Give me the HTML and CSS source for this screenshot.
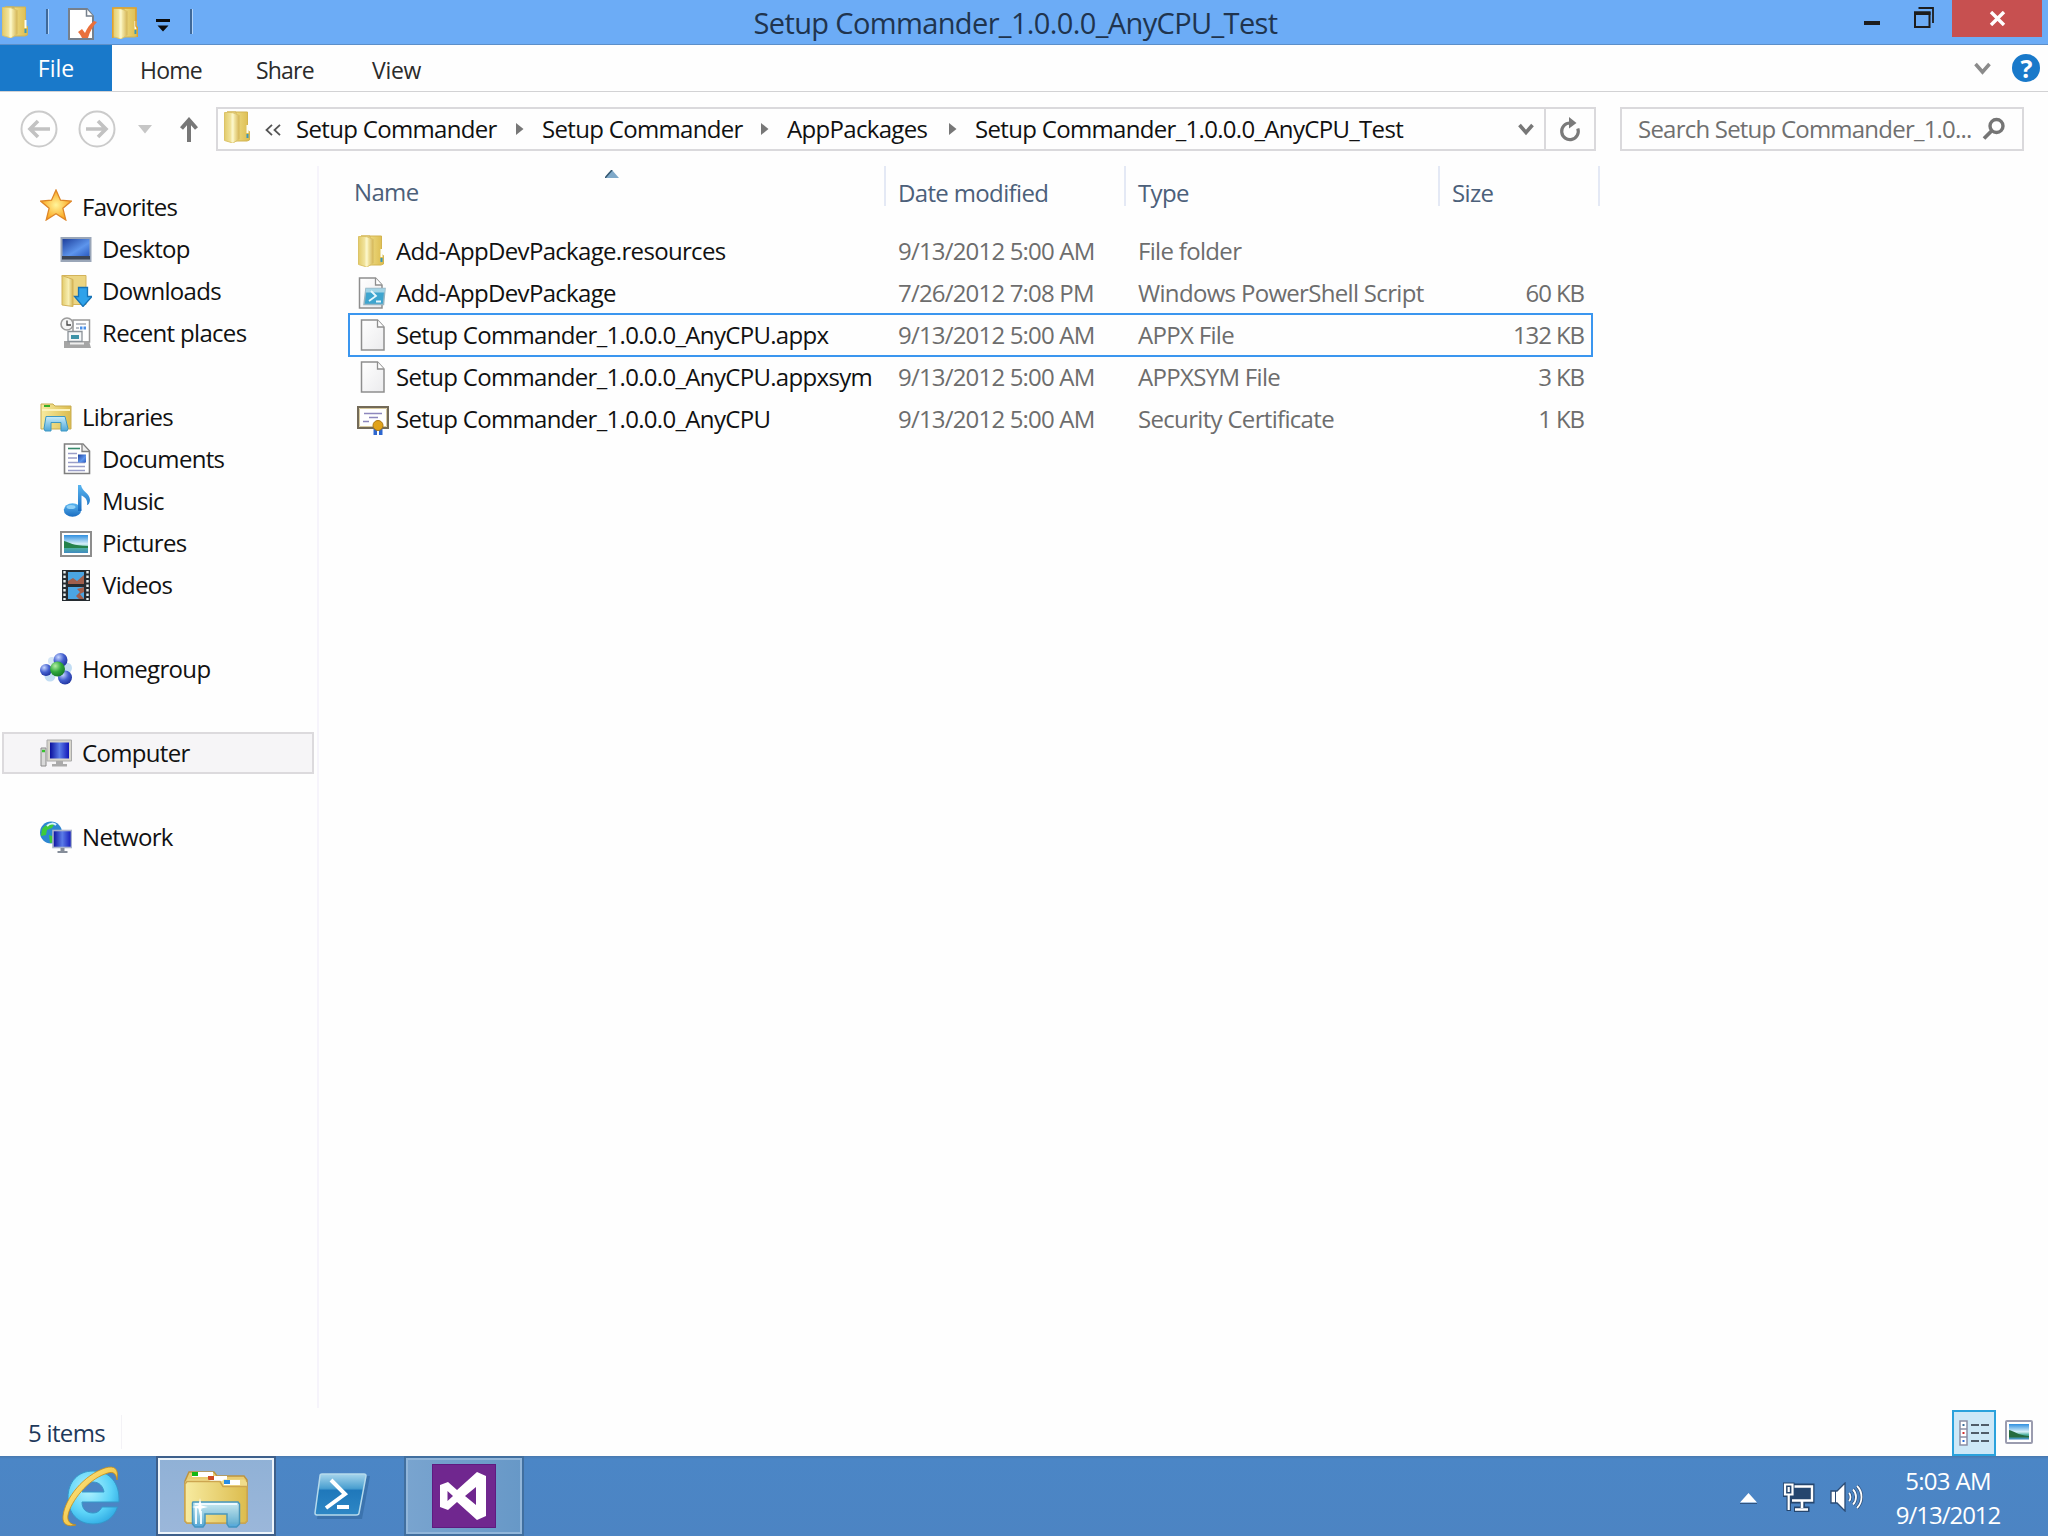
FILE: index.html
```html
<!DOCTYPE html>
<html>
<head>
    <meta charset="utf-8">
    <title>Setup Commander_1.0.0.0_AnyCPU_Test</title>
    <link rel="stylesheet" href="styles.css">
</head>
<body>
    <!-- shared gradients and symbols -->
    <svg class="defs" width="0" height="0">
        <defs>
            <linearGradient id="gFolder" x1="0" x2="1"><stop offset="0" stop-color="#f7eba0"/><stop offset="1" stop-color="#dcbc4e"/></linearGradient>
            <linearGradient id="gFlap" x1="0" x2="1"><stop offset="0" stop-color="#e2cb6a"/><stop offset=".6" stop-color="#f8efb4"/><stop offset="1" stop-color="#d3b352"/></linearGradient>
            <linearGradient id="gBlue" x1="0" y1="0" x2="1" y2="1"><stop offset="0" stop-color="#1d3f9c"/><stop offset=".6" stop-color="#5d95ec"/><stop offset="1" stop-color="#2c5cc0"/></linearGradient>
            <linearGradient id="gScreen" x1="0" x2="1"><stop offset="0" stop-color="#0a0f9c"/><stop offset=".5" stop-color="#5b7ce8"/><stop offset="1" stop-color="#1116b8"/></linearGradient>
            <linearGradient id="gPage" x1="0" y1="0" x2="1" y2="1"><stop offset="0" stop-color="#ffffff"/><stop offset="1" stop-color="#ebebed"/></linearGradient>
            <linearGradient id="gGlass" x1="0" y1="0" x2="0" y2="1"><stop offset="0" stop-color="#c9edfb"/><stop offset="1" stop-color="#4da6d8"/></linearGradient>
            <linearGradient id="gNote" x1="0" y1="0" x2="0" y2="1"><stop offset="0" stop-color="#59b5f0"/><stop offset="1" stop-color="#1a6cc0"/></linearGradient>
            <linearGradient id="gSky" x1="0" y1="0" x2="0" y2="1"><stop offset="0" stop-color="#2f8fe0"/><stop offset=".5" stop-color="#d8f0f8"/><stop offset=".7" stop-color="#4db1a0"/><stop offset="1" stop-color="#3f8ac0"/></linearGradient>
            <linearGradient id="gPs" x1="0" y1="0" x2="0" y2="1"><stop offset="0" stop-color="#a6d5ec"/><stop offset=".35" stop-color="#4a9fd0"/><stop offset=".4" stop-color="#1f78bb"/><stop offset="1" stop-color="#2e87c5"/></linearGradient>
            <linearGradient id="gRing" x1="0" y1="0" x2="1" y2="1"><stop offset="0" stop-color="#fff09a"/><stop offset="1" stop-color="#eba90c"/></linearGradient>
            <radialGradient id="gStar"><stop offset="0" stop-color="#fff59b"/><stop offset="1" stop-color="#fba51c"/></radialGradient>
            <radialGradient id="gIe" cx=".4" cy=".35" r=".75"><stop offset="0" stop-color="#b4f3ff"/><stop offset=".6" stop-color="#5bd3f8"/><stop offset="1" stop-color="#27a2df"/></radialGradient>
            <radialGradient id="gBall" cx=".35" cy=".3" r=".8"><stop offset="0" stop-color="#c6d6ff"/><stop offset=".5" stop-color="#4460cf"/><stop offset="1" stop-color="#1a2c96"/></radialGradient>
            <radialGradient id="gGreen" cx=".35" cy=".3" r=".8"><stop offset="0" stop-color="#b5f0a4"/><stop offset=".5" stop-color="#2fa83c"/><stop offset="1" stop-color="#117026"/></radialGradient>
            <symbol id="folder" viewBox="0 0 26 32">
                <path d="M3 1h20.500v18.500l2 1v8.500l-2.500 1H12V1z" fill="url(#gFolder)" stroke="#d3b450"/>
                <path d="M.5 1.500h8l7 3v23.500l-6.500 4L.5 29.500z" fill="url(#gFlap)" stroke="#dcc368"/>
                <path d="M8.500 3v28.500" stroke="#fbf5c8" stroke-width="2"/>
                <path d="M23.500 14v8" stroke="#fdfdf2" stroke-width="2"/>
                <path d="M23.500 23v4" stroke="#3a97b8" stroke-width="2"/>
            </symbol>
            <symbol id="page" viewBox="0 0 26 32">
                <path d="M1.500 1h16l6.500 7v23H1.500z" fill="url(#gPage)" stroke="#8e8e8e" stroke-width="1.500"/>
                <path d="M17.500 1v7H24" fill="#fff" stroke="#8e8e8e" stroke-width="1.300"/>
            </symbol>
        </defs>
    </svg>

    <div class="title-bar">
        <div class="quick-access">
            <svg class="qa-folder" width="26" height="32"><use href="#folder"/></svg>
            <span class="qa-sep"></span>
            <svg class="qa-props" width="30" height="32" viewBox="0 0 30 32">
                <path d="M1 1h18l6 7v23H1z" fill="#fff" stroke="#76808c" stroke-width="2"/>
                <path d="M18.500 1v7H25" fill="#fff" stroke="#76808c" stroke-width="1.500"/>
                <path d="M10 24l4-3 3 4c2-5 5-9 9-12l3 1c-4 4-7 9-9 16h-6c-1-2-2-4-4-6z" fill="#e9703b"/>
            </svg>
            <svg class="qa-new" width="26" height="32"><use href="#folder"/><path d="M.8 31V1H24v18l1.500 2v9" fill="none" stroke="#e0a22e" stroke-width="1.600"/></svg>
            <svg class="qa-drop" width="14" height="13" viewBox="0 0 14 13"><path d="M0 0h14v3H0zM1.500 6.500h11L7 12.500z" fill="#0c0c0c"/></svg>
            <span class="qa-sep qa-sep-last"></span>
        </div>
        <div class="title"><span>Setup Commander_1.0.0.0_AnyCPU_Test</span></div>
        <div class="window-buttons">
            <svg class="win-min" width="16" height="4"><rect width="16" height="4" fill="#1d1d1d"/></svg>
            <svg class="win-max" width="20" height="21" viewBox="0 0 20 21"><path d="M4.500 1H19v15" fill="none" stroke="#1d1d1d" stroke-width="1.800"/><path d="M1 5.500h14.500V20H1z" fill="none" stroke="#1d1d1d" stroke-width="2"/><path d="M0 4.500h16.500V8H0z" fill="#1d1d1d"/></svg>
            <div class="win-close"><svg width="17" height="15" viewBox="0 0 17 15"><path d="M2 1l13 13M15 1L2 14" stroke="#fff" stroke-width="3.400"/></svg></div>
        </div>
    </div>

    <div class="ribbon">
        <div class="tab-file">File</div>
        <div class="tab tab-home">Home</div>
        <div class="tab tab-share">Share</div>
        <div class="tab tab-view">View</div>
        <svg class="ribbon-toggle" width="17" height="13" viewBox="0 0 17 13"><path d="M1.500 2l7 8 7-8" fill="none" stroke="#8b8b8b" stroke-width="3.500"/></svg>
        <div class="help">?</div>
    </div>

    <div class="nav-bar">
        <svg width="38" height="38" viewBox="0 0 38 38" fill="none"><circle cx="19" cy="19" r="17.500" stroke="#cbcbcb" stroke-width="2"/><path d="M30 19H11M18 11l-8 8 8 8" stroke="#c2c2c2" stroke-width="3.600"/></svg>
        <svg class="nav-forward" width="38" height="38" viewBox="0 0 38 38" fill="none"><circle cx="19" cy="19" r="17.500" stroke="#cbcbcb" stroke-width="2"/><path d="M8 19h19M20 11l8 8-8 8" stroke="#c2c2c2" stroke-width="3.600"/></svg>
        <svg class="nav-recent" width="14" height="9"><path d="M0 0h14L7 8.500z" fill="#c6c6c6"/></svg>
        <svg class="nav-up" width="18" height="25" viewBox="0 0 18 25" fill="none"><path d="M9 25V3M1.500 11.500L9 3l7.500 8.500" stroke="#777" stroke-width="4"/></svg>
        <div class="address">
            <svg class="address-icon" width="26" height="32"><use href="#folder"/></svg>
            <svg class="crumb-more" width="16" height="12" viewBox="0 0 16 12" fill="none"><path d="M7 .8L1.500 6 7 11.200M15 .8L9.500 6l5.500 5.200" stroke="#555" stroke-width="1.800"/></svg>
            <span class="crumb crumb-1">Setup Commander</span>
            <svg class="crumb-arrow" width="8" height="12"><path d="M0 0l7.500 6L0 12z" fill="#777"/></svg>
            <span class="crumb crumb-2">Setup Commander</span>
            <svg class="crumb-arrow" width="8" height="12"><path d="M0 0l7.500 6L0 12z" fill="#777"/></svg>
            <span class="crumb crumb-3">AppPackages</span>
            <svg class="crumb-arrow" width="8" height="12"><path d="M0 0l7.500 6L0 12z" fill="#777"/></svg>
            <span class="crumb crumb-4">Setup Commander_1.0.0.0_AnyCPU_Test</span>
            <svg class="address-drop" width="16" height="13" viewBox="0 0 16 13"><path d="M1.500 2L8 9.500 14.500 2" fill="none" stroke="#777" stroke-width="3.600"/></svg>
            <div class="refresh"><svg width="22" height="26" viewBox="0 0 22 26"><path d="M18.800 12.500A8.300 8.300 0 1 1 11 7" fill="none" stroke="#7a7a7a" stroke-width="3.200"/><path d="M10 1l7.500 6-7.500 5.500z" fill="#7a7a7a"/></svg></div>
        </div>
        <div class="search">
            <span>Search Setup Commander_1.0...</span>
            <svg width="24" height="24" viewBox="0 0 24 24" fill="none"><circle cx="14.500" cy="9" r="6.500" stroke="#757575" stroke-width="3.400"/><path d="M9.500 14L2 21.500" stroke="#757575" stroke-width="3.800"/></svg>
        </div>
    </div>

    <div class="main">
        <div class="sidebar">
            <div class="nav-item">
                <svg class="star" width="32" height="32" viewBox="0 0 32 32"><path d="M16 1l4.500 10.200L31.500 12l-8.600 7.300L25.800 31 16 24.800 6.200 31l2.900-11.700L.5 12l11-.8z" fill="url(#gStar)" stroke="#dd8528" stroke-width="1.300"/></svg>
                <span>Favorites</span>
            </div>
            <div class="nav-item child">
                <svg width="32" height="32" viewBox="0 0 32 32"><rect x=".5" y="4" width="31" height="25" fill="#9aa6b8"/><rect x="2.500" y="6" width="27" height="17" fill="url(#gBlue)"/><rect x="2" y="23" width="28" height="3.500" fill="#3b4555"/></svg>
                <span>Desktop</span>
            </div>
            <div class="nav-item child">
                <svg width="32" height="32" viewBox="0 0 32 32"><svg x="1" width="26" height="32"><path d="M1 .5h24v29H10z" fill="#ecd582" stroke="#d3b35a"/><path d="M1 .5l11 4v27L1 30z" fill="url(#gFlap)" stroke="#d3b35a"/></svg><path d="M18.500 12.500h9v9H32l-9 10-8.500-10h4z" fill="#2fa2ea" stroke="#1673b7" stroke-width="1.300"/></svg>
                <span>Downloads</span>
            </div>
            <div class="nav-item child">
                <svg width="32" height="32" viewBox="0 0 32 32"><rect x="13" y="3" width="16.500" height="22" fill="#fff" stroke="#999" stroke-width="1.500"/><path d="M16 7h10M16 11h3M16 15h5" stroke="#a4abb5" stroke-width="1.500"/><path d="M20 9.500h2.500v3H20zM23.500 9.500H26v3h-2.500z" fill="#4a90e8"/><path d="M4 24h25l2 7H4z" fill="#a5a5a5"/><path d="M8 14.500h14v10H8z" fill="#f5f7f8" stroke="#8b9298" stroke-width="1.300"/><path d="M11 18h8v4h-8z" fill="#3d93a8"/><path d="M10 26.500h14" stroke="#eee" stroke-width="2"/><circle cx="7" cy="7" r="6" fill="#f6f6f6" stroke="#9c9c9c" stroke-width="1.600"/><path d="M7 3.500V8h4" stroke="#444" fill="none" stroke-width="1.300"/></svg>
                <span>Recent places</span>
            </div>

            <div class="nav-item group">
                <svg width="32" height="32" viewBox="0 0 32 32"><path d="M1 3h12l2 2h16v23H1z" fill="url(#gFolder)" stroke="#c7ac53"/><path d="M4 4h6v2H4z" fill="#36b028"/><path d="M2 9h28" stroke="#fcf3bd" stroke-width="2"/><path d="M6 15.500h19l3 12-1 2.500h-6v-8.500H11V30H5l-1-2.500z" fill="url(#gGlass)" stroke="#3f98c2"/></svg>
                <span>Libraries</span>
            </div>
            <div class="nav-item child">
                <svg width="32" height="32" viewBox="0 0 32 32"><path d="M4.500 1H23l6.500 7v22.500h-25z" fill="#fff" stroke="#7f7f7f" stroke-width="1.600"/><path d="M22 1v7.500h7" fill="#eee" stroke="#7f7f7f" stroke-width="1.300"/><path d="M8 5.500h12" stroke="#38896b" stroke-width="1.600"/><path d="M8 10.500h9M8 15h9M8 19.500h17M8 23.500h17M8 27.500h17" stroke="#9a9ec8" stroke-width="1.400"/><rect x="18" y="11.500" width="8" height="8" fill="url(#gBlue)"/></svg>
                <span>Documents</span>
            </div>
            <div class="nav-item child">
                <svg width="32" height="32" viewBox="0 0 32 32"><ellipse cx="12.500" cy="25" rx="8.700" ry="6.800" fill="url(#gNote)"/><path d="M18 0h3c1 7 9 8 9 15 0 3-2 5-3 5 1-5-2-8-5.500-9.500V26H18z" fill="url(#gNote)"/><ellipse cx="11" cy="22" rx="4.500" ry="2" fill="#8fd0f6"/></svg>
                <span>Music</span>
            </div>
            <div class="nav-item child">
                <svg width="32" height="32" viewBox="0 0 32 32"><rect x="1" y="5" width="30" height="24" fill="#fff" stroke="#8d8d8d" stroke-width="2"/><rect x="4" y="8" width="24" height="18" fill="url(#gSky)"/><path d="M4 14c5 1 9 5 24 5v2H4z" fill="#25824b"/></svg>
                <span>Pictures</span>
            </div>
            <div class="nav-item child">
                <svg width="32" height="32" viewBox="0 0 32 32"><rect x="2" y="1" width="28" height="31" fill="#252b30"/><path d="M8 3h16v12H8zM8 18h16v12H8z" fill="#4ba5e2"/><path d="M8 12l5-3 4 3 7-6v9H8zM24 18v5l-4 2 4 5h-5l-3-3 4-4-3-3z" fill="#a15f4c"/><path d="M4.500 2v29M27.500 2v29" stroke="#e9f1f1" stroke-width="2.400" stroke-dasharray="2.500 2"/></svg>
                <span>Videos</span>
            </div>

            <div class="nav-item group">
                <svg width="32" height="32" viewBox="0 0 32 32"><circle cx="10" cy="23" r="5.500" fill="#c2ddf4"/><circle cx="26.500" cy="15" r="5.500" fill="#c2ddf4"/><circle cx="12" cy="8" r="4" fill="#d5e6f6"/><circle cx="20.500" cy="7" r="7" fill="url(#gBall)"/><circle cx="6" cy="17" r="6" fill="url(#gBall)"/><circle cx="25" cy="24.500" r="7" fill="url(#gBall)"/><circle cx="17.500" cy="16" r="7.500" fill="url(#gGreen)"/></svg>
                <span>Homegroup</span>
            </div>

            <div class="nav-item group current">
                <svg width="32" height="32" viewBox="0 0 32 32"><path d="M1 11h5v18H1z" fill="#d9d9d9" stroke="#8a8a8a"/><path d="M2 14h3" stroke="#37c22e" stroke-width="2.500"/><path d="M7 3h24.500v21H7z" fill="#d7d5cc" stroke="#aaa"/><rect x="10" y="5.500" width="19" height="16" fill="url(#gScreen)"/><path d="M16 24h7v3h4v2.500H12V27h4z" fill="#aaa"/></svg>
                <span>Computer</span>
            </div>

            <div class="nav-item group">
                <svg width="32" height="32" viewBox="0 0 32 32"><circle cx="11" cy="11.500" r="11" fill="#2d86d2"/><path d="M2 8c4-5 8-6 13-6l-3 5-5 2-1 5-5 1zM9 14l6 2 1 5-6 1z" fill="#3dcb3b"/><path d="M7 5c3-3 7-3 9-1" stroke="#d5f3ff" stroke-width="2" fill="none"/><rect x="13" y="9.500" width="18.500" height="17" fill="url(#gScreen)" stroke="#aab4cc" stroke-width="1.600"/><path d="M20.500 27h4v3h3v2h-10v-2h3z" fill="#858d99"/></svg>
                <span>Network</span>
            </div>
        </div>

        <div class="files">
            <svg class="sort-arrow" width="14" height="8"><path d="M7 0l7 8H0z" fill="#7fa9c9"/><path d="M7 0L0 8" stroke="#33566f" stroke-width="1.500"/></svg>
            <div class="row header">
                <div class="col-name">Name</div>
                <div class="col-date">Date modified</div>
                <div class="col-type">Type</div>
                <div class="col-size">Size</div>
            </div>
            <div class="row">
                <div class="col-name"><svg width="32" height="32"><use href="#folder" x="1" width="26" height="32"/></svg><span>Add-AppDevPackage.resources</span></div>
                <div class="col-date">9/13/2012 5:00 AM</div>
                <div class="col-type">File folder</div>
                <div class="col-size"></div>
            </div>
            <div class="row">
                <div class="col-name"><svg width="32" height="32" viewBox="0 0 32 32"><use href="#page" x="1" width="26" height="32"/><path d="M9 11.500h19l-1.500 16H7z" fill="#3ea5cf" stroke="#97b5c2" stroke-width="1.500"/><path d="M9 11.500h19l-.4 4H8.500z" fill="#a3d4e6"/><path d="M14 14l5 5-7 5M19 24.500h5" fill="none" stroke="#e7f7fd" stroke-width="1.800"/></svg><span>Add-AppDevPackage</span></div>
                <div class="col-date">7/26/2012 7:08 PM</div>
                <div class="col-type">Windows PowerShell Script</div>
                <div class="col-size">60 KB</div>
            </div>
            <div class="row focused">
                <div class="col-name"><svg width="32" height="32"><use href="#page" x="3" width="26" height="32"/></svg><span>Setup Commander_1.0.0.0_AnyCPU.appx</span></div>
                <div class="col-date">9/13/2012 5:00 AM</div>
                <div class="col-type">APPX File</div>
                <div class="col-size">132 KB</div>
            </div>
            <div class="row">
                <div class="col-name"><svg width="32" height="32"><use href="#page" x="3" width="26" height="32"/></svg><span>Setup Commander_1.0.0.0_AnyCPU.appxsym</span></div>
                <div class="col-date">9/13/2012 5:00 AM</div>
                <div class="col-type">APPXSYM File</div>
                <div class="col-size">3 KB</div>
            </div>
            <div class="row">
                <div class="col-name"><svg width="32" height="32" viewBox="0 0 32 32"><rect x="1" y="4" width="30" height="21" fill="#fff" stroke="#736a58" stroke-width="2"/><path d="M2.500 5.500h27v18h-27z" fill="none" stroke="#d6c9a0"/><path d="M7 10.500h18M12 14.500h9M6 18.500h6" stroke="#8d87bd" stroke-width="1.300"/><path d="M16.500 24h3.500v8h-3.500zM22 24h3.500v8H22z" fill="#2d66cf"/><circle cx="21" cy="22.500" r="5" fill="#e0a21a" stroke="#ad7712"/></svg><span>Setup Commander_1.0.0.0_AnyCPU</span></div>
                <div class="col-date">9/13/2012 5:00 AM</div>
                <div class="col-type">Security Certificate</div>
                <div class="col-size">1 KB</div>
            </div>
        </div>
    </div>

    <div class="status-bar">
        <span class="item-count">5 items</span>
        <div class="view-details"><svg width="30" height="26" viewBox="0 0 30 26"><path d="M1 1h7v24H1zM1 9h7M1 17h7" fill="#fff" stroke="#8b8fa5" stroke-width="1.500"/><path d="M3.500 4h2v2h-2z" fill="#3b6f9c"/><path d="M3.500 12h2v2h-2z" fill="#d03030"/><path d="M3.500 20h2v2h-2z" fill="#2f6fd8"/><path d="M12 5h8M22 5h8M12 13h8M22 13h8M12 21h8M22 21h8" stroke="#505c69" stroke-width="1.800"/></svg></div>
        <svg class="view-thumbs" width="28" height="24" viewBox="0 0 28 24"><rect x="1" y="1" width="26" height="22" rx="1" fill="#fff" stroke="#9b9caf" stroke-width="2"/><rect x="4" y="4" width="20" height="15.500" fill="url(#gSky)"/><path d="M4 10c5 1 8 5 20 6v1.500H4z" fill="#256b3e"/></svg>
    </div>

    <div class="taskbar">
        <svg class="task-ie" width="60" height="62" viewBox="0 0 60 62">
            <path d="M31 6C16 6 6 17 6 32.500 6 48 16 59 31 59c12 0 21-6 24.500-17H40c-2 4-5 6-9 6-7 0-11-4-11-11h37C58 18 48 6 31 6zM20 27c1-6 5-10 11-10s10 4 11 10z" fill="url(#gIe)" stroke="#3597c9"/>
            <path d="M14 60C6 62 0 60 1 51 3 33 22 10 43 3c10-3 14 1 12 12-1-8-5-9-12-6C26 15 9 36 6 50c-1 6 2 9 8 10z" fill="url(#gRing)" stroke="#c98d13" stroke-width=".8"/>
        </svg>
        <div class="task-button active">
            <svg width="64" height="58" viewBox="0 0 64 58">
                <path d="M1 11l4-9h25l3 4h27l3 4v41l-2 2H3l-2-2z" fill="#e9cd73" stroke="#bd9440" stroke-width="1.500"/>
                <path d="M8 2h21v5H8zM25 6h18v5H25z" fill="#fff"/>
                <path d="M8 2h6v4H8z" fill="#13b713"/><path d="M24 6h6v4h-6z" fill="#cf4a24"/>
                <path d="M1 12l3-2.500h20l3 1.500h11l2-1.500h20l3 3V51l-2 2H3l-2-2z" fill="#f0dc8a"/>
                <path d="M1 14l2-2.500h33l3 5h24V51l-2 2H3l-2-2z" fill="url(#gFolder)" stroke="#cda650" stroke-width="1.500"/>
                <path d="M40 10h16v5H40z" fill="#fff"/><path d="M40 10h6v4h-6z" fill="#278ee6"/>
                <path d="M9 32h45l1.500 2v20l-3 3H45l-2-3V44H21v10l-2 3h-8l-2.500-3V33z" fill="url(#gGlass)" stroke="#3d93c2" stroke-width="1.500" opacity=".92"/>
                <path d="M11 34h42M12 37v17M17 41v13" stroke="#edfaff" stroke-width="2"/>
                <path d="M16 28l1.500 7.500L24 37l-6.500 1.500L16 46l-1.500-7.500L8 37l6.500-1.500z" fill="#fff"/>
            </svg>
        </div>
        <svg class="task-ps" width="56" height="46" viewBox="0 0 56 46">
            <path d="M9 3h47l-8 43H3z" fill="#2c6297" opacity=".5"/>
            <path d="M8 1h42c2 0 2 1 2 2l-7 37c0 1-1 2-3 2H3c-2 0-2-1-2-2L6 3c0-1 1-2 2-2z" fill="url(#gPs)" stroke="#b5daec" stroke-width="1.500"/>
            <path d="M17 7l14 14-19 14M23 34h12" fill="none" stroke="#fff" stroke-width="4"/>
        </svg>
        <div class="task-button running">
            <svg width="64" height="64" viewBox="0 0 64 64">
                <rect width="64" height="64" fill="#5f1a80"/>
                <rect x="1" y="1" width="62" height="62" fill="#70278f"/>
                <path d="M45 8l9 4v40l-9 4-20-18-9 8-8-3V21l8-3 9 8zM15.500 27v10l5.500-5zM44 23L33 32l11 9z" fill="#fff" fill-rule="evenodd"/>
            </svg>
        </div>
        <div class="tray">
            <svg class="tray-arrow" width="17" height="11" viewBox="0 0 17 11"><path d="M8.500 0L17 9.500H0z" fill="#fff"/><path d="M0 10.500h17" stroke="#31547f"/></svg>
            <svg class="tray-network" width="33" height="30" viewBox="0 0 33 30">
                <path d="M12 1.500h20.500v20H23v3h4.500V30H12v-5.500h6v-3H8V1.500z" fill="#25466e"/>
                <path d="M12 4.500h18v14H10" fill="none" stroke="#fff" stroke-width="2.400"/>
                <path d="M20 19v7M13 27.500h13" stroke="#fff" stroke-width="2.600"/>
                <path d="M1 .5h11.500V15H9v14H4.500V15H1z" fill="#25466e"/>
                <path d="M3 2.500h7.500v10H3z" fill="none" stroke="#fff" stroke-width="2.200"/><path d="M6.700 5v5M6.700 13v15" stroke="#fff" stroke-width="2.200"/>
            </svg>
            <svg class="tray-volume" width="33" height="30" viewBox="0 0 33 30">
                <path d="M1 9h6l8-8v28l-8-8H1z" fill="#fff" stroke="#2b4c75" stroke-width="1.300"/>
                <path d="M5.500 9v12" stroke="#2b4c75"/>
                <path d="M19 11c2 2 2 6 0 8M23 7.500c4 4 4 11 0 15M27 4c6 6 6 16 0 22" fill="none" stroke="#2b4c75" stroke-width="3.200"/>
                <path d="M19 11c2 2 2 6 0 8M23 7.500c4 4 4 11 0 15M27 4c6 6 6 16 0 22" fill="none" stroke="#fff" stroke-width="1.800"/>
            </svg>
            <div class="clock"><div>5:03 AM</div><div class="date">9/13/2012</div></div>
        </div>
    </div>
</body>
</html>
```
FILE: styles.css
```css
* {
    box-sizing: border-box;
}

body {
    margin: 0;
    width: 2048px;
    height: 1536px;
    display: flex;
    flex-direction: column;
    overflow: hidden;
    background: #fefefe;
    color: #111;
    font-family: "Open Sans", "Noto Sans", sans-serif;
    font-size: 24px;
    letter-spacing: -0.68px;
    line-height: 32px;
    white-space: nowrap;
}

svg {
    display: block;
    flex: none;
}

.defs {
    position: absolute;
}

/* title bar */
.title-bar {
    height: 45px;
    flex: none;
    display: flex;
    background: #6cacf6;
    border-bottom: 1px solid #5c8fc9;
}

.quick-access {
    width: 300px;
    display: flex;
    align-items: flex-start;
    padding: 6px 0 0 2px;
}

.qa-sep {
    width: 3px;
    height: 25px;
    margin: 3px 0 0 18px;
    background: #3f6999;
    border-right: 1px solid #b3d5fb;
}

.qa-sep-last {
    margin-left: 20px;
}

.qa-props {
    margin: 2px 0 0 19px;
}

.qa-new {
    margin: 1px 0 0 14px;
}

.qa-drop {
    margin: 13px 0 0 18px;
}

.title {
    width: 1431px;
    text-align: center;
    color: #20344e;
    font-size: 29px;
    letter-spacing: -0.63px;
    line-height: 45px;
}

.window-buttons {
    flex: 1;
    display: flex;
    align-items: flex-start;
    justify-content: flex-end;
    padding-right: 6px;
}

.win-min {
    margin-top: 21px;
}

.win-max {
    margin: 7px 18px 0 34px;
}

.win-close {
    width: 90px;
    height: 37px;
    display: flex;
    align-items: center;
    justify-content: center;
    background: #c75050;
}

/* ribbon tabs */
.ribbon {
    height: 47px;
    flex: none;
    display: flex;
    align-items: center;
    padding-right: 8px;
    border-bottom: 1px solid #d2d2d4;
    color: #2b2b2b;
    font-size: 23px;
}

.tab-file {
    width: 112px;
    height: 46px;
    line-height: 47px;
    text-align: center;
    background: #1979ca;
    color: #fff;
    letter-spacing: 0;
}

.tab {
    padding-top: 4px;
    letter-spacing: -0.8px;
}

.tab-home {
    margin-left: 28px;
    width: 116px;
}

.tab-share {
    width: 116px;
}

.tab-view {
    letter-spacing: -0.3px;
}

.ribbon-toggle {
    margin-left: auto;
}

.help {
    width: 28px;
    height: 28px;
    margin-left: 21px;
    border-radius: 50%;
    background: #1979ca;
    color: #fff;
    font-size: 25px;
    font-weight: 700;
    line-height: 28px;
    text-align: center;
}

/* back, forward, address, search */
.nav-bar {
    height: 74px;
    flex: none;
    display: flex;
    align-items: center;
    padding-left: 20px;
}

.nav-forward {
    margin-left: 20px;
}

.nav-recent {
    margin-left: 22px;
}

.nav-up {
    margin-left: 28px;
}

.address {
    width: 1380px;
    height: 44px;
    margin-left: 18px;
    display: flex;
    align-items: center;
    border: 2px solid #dad9dc;
}

.address-icon {
    margin: -4px 0 0 6px;
}

.crumb-more {
    margin: 2px 15px 0 15px;
}

.crumb {
    width: 220px;
}

.crumb-2 {
    width: 219px;
}

.crumb-3 {
    width: 162px;
}

.crumb-4 {
    width: 540px;
}

.crumb-arrow {
    margin-right: 18px;
}

.address-drop {
    margin-left: auto;
}

.refresh {
    width: 50px;
    height: 40px;
    margin-left: 10px;
    display: flex;
    align-items: center;
    justify-content: center;
    border-left: 2px solid #dad9dc;
}

.search {
    width: 404px;
    height: 44px;
    margin-left: 24px;
    padding: 0 16px;
    display: flex;
    align-items: center;
    justify-content: space-between;
    border: 2px solid #dad9dc;
    color: #707070;
    letter-spacing: -0.78px;
}

/* content */
.main {
    flex: 1;
    display: flex;
}

.sidebar {
    width: 319px;
    padding: 20px 3px 0 2px;
    border-right: 2px solid #f6f4fb;
}

.nav-item {
    height: 42px;
    display: flex;
    align-items: center;
    gap: 10px;
    padding-left: 38px;
}

.star {
    margin-top: -5px;
}

.nav-item.child {
    padding-left: 58px;
}

.nav-item.group {
    margin-top: 42px;
}

.nav-item.current {
    padding-left: 36px;
    background: #f6f5f7;
    border: 2px solid #dcdadd;
}

.files {
    position: relative;
    padding-left: 30px;
}

.sort-arrow {
    position: absolute;
    left: 286px;
    top: 4px;
}

.row {
    width: 1243px;
    height: 42px;
    display: grid;
    grid-template-columns: 536px 240px 314px 153px;
    align-items: center;
    color: #6d6d6d;
}

.row > div {
    padding-left: 13px;
}

.row .col-name {
    display: flex;
    align-items: center;
    gap: 7px;
    padding-left: 8px;
    color: #111;
}

.row .col-date {
    letter-spacing: -0.82px;
}

.row .col-size {
    padding: 0 8px 0 0;
    text-align: right;
    letter-spacing: -1.1px;
}

.row.header {
    width: 1251px;
    height: 40px;
    grid-template-columns: 537px 240px 314px 160px;
    margin-bottom: 24px;
}

.row.header > div {
    height: 40px;
    padding: 11px 0 0 12px;
    border-right: 2px solid #e4e9f5;
    color: #4c607a;
    text-align: left;
    letter-spacing: -0.65px;
    line-height: 32px;
}

.row.header .col-name {
    padding: 12px 0 0 5px;
}

.row.focused {
    outline: 2px solid #3a96ef;
    outline-offset: -1px;
}

/* status bar */
.status-bar {
    height: 48px;
    flex: none;
    display: flex;
    align-items: center;
    padding-right: 15px;
    color: #1e395b;
}

.item-count {
    width: 122px;
    padding: 2px 0 0 28px;
    border-right: 1px solid #f3f2f6;
}

.view-details {
    width: 44px;
    height: 46px;
    margin: 2px 9px 0 auto;
    display: flex;
    align-items: center;
    justify-content: center;
    background: #cde8f7;
    border: 2px solid #2ba2dc;
}

/* taskbar */
.taskbar {
    height: 80px;
    flex: none;
    display: flex;
    align-items: center;
    padding-left: 62px;
    background: linear-gradient(#4878ae 0, #4b86c6 3px, #4c84c3);
}

.task-ie {
    margin-right: 34px;
}

.task-button {
    width: 120px;
    height: 80px;
    display: flex;
    align-items: center;
    justify-content: center;
    border: 2px solid #3d5f8b;
    box-shadow: inset 0 0 0 2px #edf4fa;
    background: linear-gradient(#90b1d6, #9bb7da);
}

.task-button.active svg {
    margin-top: 5px;
}

.task-ps {
    margin: 0 34px 0 38px;
}

.task-button.running {
    border-color: #416f9f;
    box-shadow: inset 0 0 0 2px #91b6da;
    background: linear-gradient(90deg, #79a4cf, #6798c7);
}

.tray {
    margin-left: auto;
    padding-right: 15px;
    display: flex;
    align-items: center;
    color: #fff;
}

.tray-arrow {
    margin-top: 4px;
}

.tray-network {
    margin: 2px 15px 0 25px;
}

.tray-volume {
    margin-top: 2px;
}

.clock {
    width: 170px;
    text-align: center;
    line-height: 34px;
}

.clock div:first-child {
    padding-top: 4px;
}

.clock .date {
    letter-spacing: -1px;
}
```
